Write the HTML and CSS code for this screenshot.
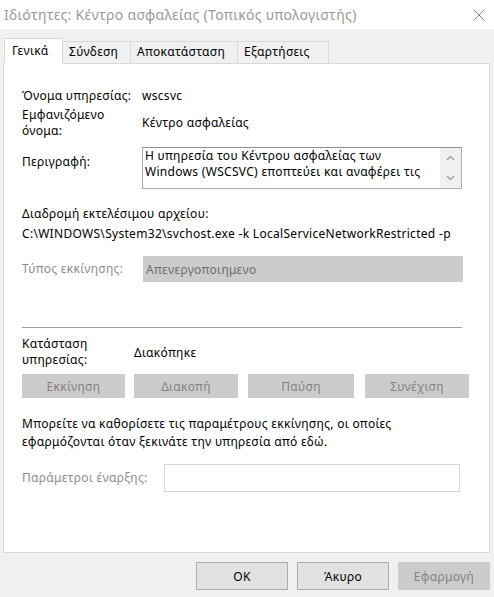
FILE: index.html
```html
<!DOCTYPE html>
<html lang="el">
<head>
<meta charset="utf-8">
<title>Ιδιότητες</title>
<link rel="stylesheet" href="styles.css">
</head>
<body>
<div class="window">
  <div class="titlebar">
    <span class="title">Ιδιότητες: Κέντρο ασφαλείας (Τοπικός υπολογιστής)</span>
    <svg class="close" width="12" height="12" viewBox="0 0 12 12"><path d="M0.5 0.5 L11.5 11.5 M11.5 0.5 L0.5 11.5" stroke="#8a8a8a" stroke-width="1" fill="none"/></svg>
  </div>
  <div class="content">
    <div class="tabs">
      <div class="tab selected">Γενικά</div>
      <div class="tab">Σύνδεση</div>
      <div class="tab">Αποκατάσταση</div>
      <div class="tab">Εξαρτήσεις</div>
    </div>
    <div class="panel">
      <div class="row r-name">
        <div class="label">Όνομα υπηρεσίας:</div>
        <div class="value">wscsvc</div>
      </div>
      <div class="row r-display">
        <div class="label">Εμφανιζόμενο<br>όνομα:</div>
        <div class="value">Κέντρο ασφαλείας</div>
      </div>
      <div class="row r-desc">
        <div class="label">Περιγραφή:</div>
        <div class="textarea">
          <div class="ta-text">Η υπηρεσία του Κέντρου ασφαλείας των<br>Windows (WSCSVC) εποπτεύει και αναφέρει τις</div>
          <div class="ta-scroll">
            <svg width="9" height="6" viewBox="0 0 9 6"><path d="M1 5 L4.5 1.5 L8 5" stroke="#9a9a9a" stroke-width="1.2" fill="none"/></svg>
            <svg width="9" height="6" viewBox="0 0 9 6"><path d="M1 1 L4.5 4.5 L8 1" stroke="#9a9a9a" stroke-width="1.2" fill="none"/></svg>
          </div>
        </div>
      </div>
      <div class="path-label">Διαδρομή εκτελέσιμου αρχείου:</div>
      <div class="path">C:\WINDOWS\System32\svchost.exe -k LocalServiceNetworkRestricted -p</div>
      <div class="row r-start">
        <div class="label disabled">Τύπος εκκίνησης:</div>
        <div class="combo">
          <span>Απενεργοποιημενο</span>
          <svg width="9" height="6" viewBox="0 0 9 6"><path d="M1 1 L4.5 4.5 L8 1" stroke="#bdbdbd" stroke-width="1" fill="none"/></svg>
        </div>
      </div>
      <div class="sep"></div>
      <div class="row r-status">
        <div class="label status-label">Κατάσταση<br>υπηρεσίας:</div>
        <div class="value status-value">Διακόπηκε</div>
      </div>
      <div class="svc-buttons">
        <div class="btn dis b1">Εκκίνηση</div>
        <div class="btn dis b2">Διακοπή</div>
        <div class="btn dis b3">Παύση</div>
        <div class="btn dis b4">Συνέχιση</div>
      </div>
      <p class="para">Μπορείτε να καθορίσετε τις παραμέτρους εκκίνησης, οι οποίες<br>εφαρμόζονται όταν ξεκινάτε την υπηρεσία από εδώ.</p>
      <div class="row r-params">
        <div class="label disabled params-label">Παράμετροι έναρξης:</div>
        <div class="input"></div>
      </div>
    </div>
    <div class="footer">
      <div class="btn fbtn">OK</div>
      <div class="btn fbtn">Άκυρο</div>
      <div class="btn fbtn fdis">Εφαρμογή</div>
    </div>
  </div>
</div>
</body>
</html>
```
FILE: styles.css
```css
* { box-sizing: border-box; }
html, body {
  margin: 0;
  padding: 0;
  width: 494px;
  height: 597px;
  overflow: hidden;
  background: #f0f0f0;
  font-family: "Noto Sans", "Liberation Sans", sans-serif;
  font-size: 12px;
  letter-spacing: 0.3px;
  color: #000;
}
.window { width: 494px; height: 597px; }
.titlebar {
  height: 29px;
  background: #fff;
  display: flex;
  align-items: center;
  justify-content: space-between;
  padding: 0 9px 1px 4px;
}
.title {
  font-size: 14px;
  color: #9a9a9a;
  letter-spacing: 0.3px;
}
.close { margin-top: 2px; }
.content { padding: 9px 4px 0 3px; }
.tabs {
  display: flex;
  align-items: flex-end;
  height: 25px;
  padding-left: 1px;
  position: relative;
  z-index: 1;
}
.tab {
  height: 22px;
  line-height: 20px;
  padding: 0 6px;
  border: 1px solid #d9d9d9;
  border-bottom: none;
  border-left: none;
  background: #f0f0f0;
  white-space: nowrap;
}
.tab.selected {
  height: 26px;
  margin-bottom: -1px;
  background: #fff;
  border-left: 1px solid #d9d9d9;
  line-height: 24px;
  padding: 0 7px 0 7px;
  width: 59px;
}
.tabs .tab:nth-child(2) { width: 68px; }
.tabs .tab:nth-child(3) { width: 107px; }
.tabs .tab:nth-child(4) { width: 91px; }
.panel {
  background: #fff;
  border: 1px solid #d9d9d9;
  height: 490px;
  width: 487px;
  padding: 24px 0 0 18px;
}
.row { display: flex; align-items: center; }
.label { width: 120px; flex: none; line-height: 16px; white-space: nowrap; }
.value { line-height: 16px; }
.disabled { color: #8c8c8c; }
.r-display { margin-top: 3px; }
.r-desc { margin-top: 8px; align-items: flex-start; }
.r-desc .label { margin-top: 7px; }
.textarea {
  width: 320px;
  height: 42px;
  border: 1px solid #acacac;
  border-top-color: #8f8f8f;
  display: flex;
  padding-left: 2px;
}
.ta-text {
  flex: 1;
  line-height: 16px;
  overflow: hidden;
  white-space: nowrap;
}
.ta-scroll {
  width: 21px;
  background: #f0f0f0;
  display: flex;
  flex-direction: column;
  align-items: center;
  justify-content: space-between;
  padding: 7px 0 7px 0;
}
.path-label { margin-top: 17px; line-height: 16px; }
.path { margin-top: 4px; line-height: 16px; white-space: nowrap; }
.r-start { margin-top: 14px; }
.combo {
  width: 320px;
  height: 26px;
  margin-left: 1px;
  background: #cccccc;
  display: flex;
  align-items: center;
  justify-content: space-between;
  padding: 0 8px 0 3px;
  color: #6d6d6d;
}
.sep {
  margin-top: 45px;
  width: 440px;
  height: 1px;
  background: #a0a0a0;
}
.r-status { margin-top: 8px; }
.status-label { width: 112px; }
.status-value { margin-top: 2px; }
.svc-buttons {
  margin-top: 6px;
  display: flex;
  gap: 9px;
}
.btn {
  height: 24px;
  display: flex;
  align-items: center;
  justify-content: center;
}
.dis { background: #cccccc; color: #838383; }
.b1 { width: 103px; }
.b2 { width: 104px; }
.b3 { width: 106px; margin-left: 1px; }
.b4 { width: 104px; margin-left: 2px; }
.para {
  margin: 17px 0 0 0;
  line-height: 18px;
  white-space: nowrap;
}
.r-params { margin-top: 13px; }
.params-label { width: 142px; }
.input {
  width: 296px;
  height: 28px;
  border: 1px solid #d9d9d9;
  background: #fff;
}
.footer {
  display: flex;
  justify-content: flex-end;
  gap: 9px;
  margin-top: 9px;
}
.fbtn {
  width: 92px;
  height: 28px;
  background: #e1e1e1;
  border: 1px solid #adadad;
}
.fdis { background: #cccccc; border-color: #cccccc; color: #838383; }
```
